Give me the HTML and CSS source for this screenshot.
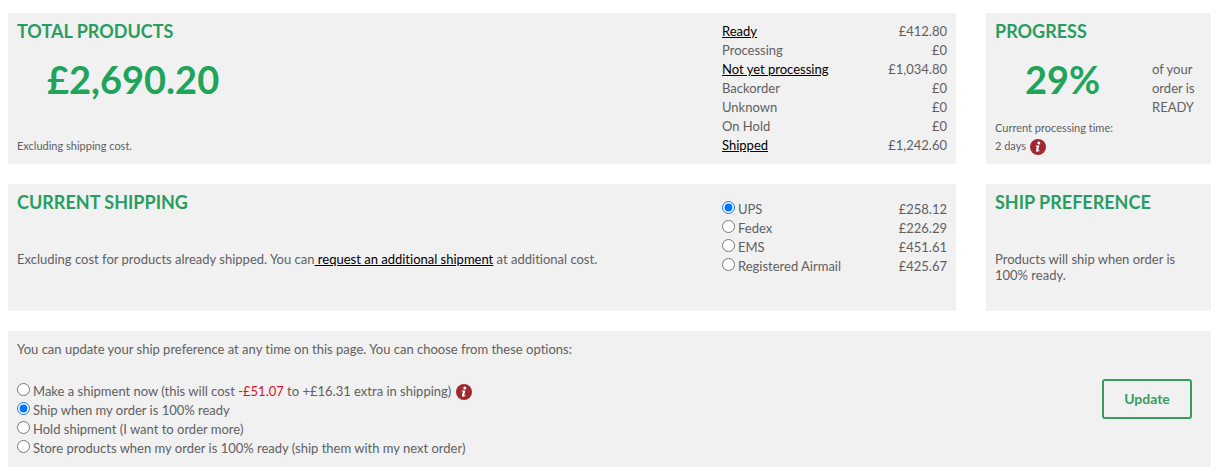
FILE: index.html
```html
<!DOCTYPE html>
<html lang="en">
<head>
<meta charset="utf-8">
<title>Order summary</title>
<link rel="stylesheet" href="styles.css">
</head>
<body>
<main class="page">
  <section class="panel totals">
    <div class="intro">
      <h2 class="title">TOTAL PRODUCTS</h2>
      <p class="amount">£2,690.20</p>
      <p class="small note">Excluding shipping cost.</p>
    </div>
    <table class="costs">
      <tr><th scope="row"><a href="#ready">Ready</a></th><td>£412.80</td></tr>
      <tr><th scope="row">Processing</th><td>£0</td></tr>
      <tr><th scope="row"><a href="#not-yet">Not yet processing</a></th><td>£1,034.80</td></tr>
      <tr><th scope="row">Backorder</th><td>£0</td></tr>
      <tr><th scope="row">Unknown</th><td>£0</td></tr>
      <tr><th scope="row">On Hold</th><td>£0</td></tr>
      <tr><th scope="row"><a href="#shipped">Shipped</a></th><td>£1,242.60</td></tr>
    </table>
  </section>

  <section class="panel progress">
    <h2 class="title">PROGRESS</h2>
    <div class="percent-row">
      <p class="amount">29%</p>
      <p class="ready">of your order is READY</p>
    </div>
    <p class="small time">Current processing time:<br>2 days
      <svg class="info" viewBox="0 0 16 16" role="img" aria-label="Info"><circle cx="8" cy="8" r="8" fill="#a02830"/><circle cx="8.8" cy="4" r="1.5" fill="#fff"/><path d="M5.8 6.6H9.4L8.2 11.2Q8.1 11.9 9.7 11.1L9.5 12.1Q5.4 13.9 6 11.2L6.9 7.6H5.6Z" fill="#fff"/></svg>
    </p>
  </section>

  <section class="panel shipping">
    <div class="intro">
      <h2 class="title">CURRENT SHIPPING</h2>
      <p class="message">Excluding cost for products already shipped. You can<a href="#request"> request an additional shipment</a> at additional cost.</p>
    </div>
    <table class="costs carriers">
      <tr><td><label class="choice"><input type="radio" name="carrier" checked>UPS</label></td><td>£258.12</td></tr>
      <tr><td><label class="choice"><input type="radio" name="carrier">Fedex</label></td><td>£226.29</td></tr>
      <tr><td><label class="choice"><input type="radio" name="carrier">EMS</label></td><td>£451.61</td></tr>
      <tr><td><label class="choice"><input type="radio" name="carrier">Registered Airmail</label></td><td>£425.67</td></tr>
    </table>
  </section>

  <section class="panel preference">
    <h2 class="title">SHIP PREFERENCE</h2>
    <p class="message">Products will ship when order is 100% ready.</p>
  </section>

  <form class="panel options">
    <div>
      <p class="lead">You can update your ship preference at any time on this page. You can choose from these options:</p>
      <div class="option"><label class="choice"><input type="radio" name="preference"><span>Make a shipment now (this will cost <span class="saving">-£51.07</span> to +£16.31 extra in shipping)</span></label>
        <svg class="info" viewBox="0 0 16 16" role="img" aria-label="Info"><circle cx="8" cy="8" r="8" fill="#a02830"/><circle cx="8.8" cy="4" r="1.5" fill="#fff"/><path d="M5.8 6.6H9.4L8.2 11.2Q8.1 11.9 9.7 11.1L9.5 12.1Q5.4 13.9 6 11.2L6.9 7.6H5.6Z" fill="#fff"/></svg>
      </div>
      <div class="option"><label class="choice"><input type="radio" name="preference" checked>Ship when my order is 100% ready</label></div>
      <div class="option"><label class="choice"><input type="radio" name="preference">Hold shipment (I want to order more)</label></div>
      <div class="option"><label class="choice"><input type="radio" name="preference">Store products when my order is 100% ready (ship them with my next order)</label></div>
    </div>
    <button class="update" type="button">Update</button>
  </form>
</main>
</body>
</html>
```

FILE: styles.css
```css
* { box-sizing: border-box; }
body { margin: 0; background: #fff; color: #606060; font: 13px/19px Lato, sans-serif; font-variant-ligatures: none; }
h2, p { margin: 0; }
a { color: #000; text-decoration: underline; }
.page { display: grid; grid-template-columns: minmax(0, 1fr) 225px; gap: 20px 30px; padding: 13px 8px 8px; }
.panel { background: #f2f1f2; padding: 9px; }
.title { color: #279e60; font-size: 18px; line-height: 18px; font-weight: 700; }
.amount { color: #20a45a; font-size: 38px; line-height: 48px; font-weight: 700; }
.small { font-size: 11px; line-height: 19px; }
.totals, .shipping { display: flex; justify-content: space-between; }
.totals .amount { padding: 15px 0 0 30px; }
.note { padding-top: 33px; }
.costs { width: 225px; border-collapse: collapse; align-self: flex-start; }
.costs th, .costs td { padding: 0; font-weight: 400; text-align: left; height: 19px; }
.costs td:last-child { text-align: right; }
.percent-row { display: flex; justify-content: space-between; height: 64px; padding: 15px 0 0 30px; }
.ready { width: 50px; padding-top: 5px; }
.progress { padding-bottom: 0; }
.time { margin-top: 15px; line-height: 18px; }
.info { width: 16px; height: 16px; margin-left: 1px; vertical-align: middle; }
.shipping, .preference { min-height: 127px; }
.message { margin-top: 40px; line-height: 16px; }
.carriers { margin-top: 7px; }
.choice { display: flex; align-items: center; gap: 3px; }
.choice input { width: 13px; height: 13px; margin: 0 0 4px; }
.options { grid-column: 1 / -1; display: flex; justify-content: space-between; align-items: center; padding-right: 19px; }
.lead { margin-bottom: 23px; }
.option { display: flex; align-items: center; gap: 4px; height: 19px; }
.saving { color: #e0102c; }
.update { width: 90px; height: 40px; border: 2px solid #379e62; border-radius: 3px; background: transparent; color: #379e62; font: 700 14px/20px Lato, sans-serif; }
```
